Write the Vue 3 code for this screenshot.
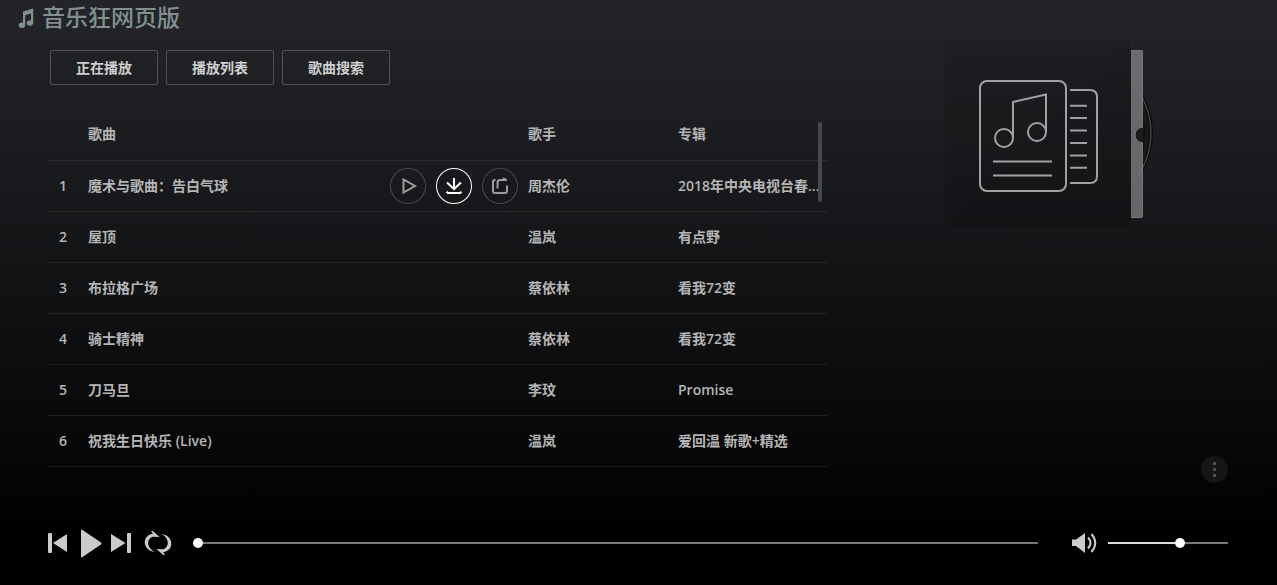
<script setup>
import { ref, computed } from 'vue'

const tabs = ['正在播放', '播放列表', '歌曲搜索']
const songs = [
  { name: '魔术与歌曲：告白气球', singer: '周杰伦', album: '2018年中央电视台春...' },
  { name: '屋顶', singer: '温岚', album: '有点野' },
  { name: '布拉格广场', singer: '蔡依林', album: '看我72变' },
  { name: '骑士精神', singer: '蔡依林', album: '看我72变' },
  { name: '刀马旦', singer: '李玟', album: 'Promise' },
  { name: '祝我生日快乐 (Live)', singer: '温岚', album: '爱回温 新歌+精选' },
]
const active = ref(0)
const progress = ref(0)
const volume = ref(61)
const volumeStyle = computed(() => ({ '--fill': volume.value + '%' }))
</script>

<template>
  <div class="player">
    <header class="brand">
      <svg class="brand-icon" viewBox="0 0 16 20" aria-hidden="true">
        <path d="M5 3.6 15.2 0.6V14.6A3.3 2.8 0 1 1 13 12.4V5.6L7.2 7.2V17A3.3 2.8 0 1 1 5 14.6Z" />
      </svg>
      <h1>音乐狂网页版</h1>
    </header>

    <main class="body">
      <section class="left">
        <nav class="tabs">
          <button v-for="t in tabs" :key="t" type="button">{{ t }}</button>
        </nav>
        <div class="list">
          <table>
            <thead>
              <tr>
                <th class="num"></th>
                <th>歌曲</th>
                <th class="singer">歌手</th>
                <th class="album">专辑</th>
              </tr>
            </thead>
            <tbody>
              <tr v-for="(s, i) in songs" :key="s.name" @mouseenter="active = i">
                <td class="num">{{ i + 1 }}</td>
                <td>
                  <div class="song">
                    <span class="name">{{ s.name }}</span>
                    <div v-if="active === i" class="actions">
                      <button type="button" aria-label="播放">
                        <svg viewBox="0 0 36 36"><path d="M13.500 11.500V24.500L25 18Z" /></svg>
                      </button>
                      <button type="button" class="lit" aria-label="下载">
                        <svg viewBox="0 0 36 36"><path d="M18 10V20.500M11 14.500 18 21.200 25 14.500M10.500 23.700 12 25H24L25.500 23.700" /></svg>
                      </button>
                      <button type="button" aria-label="分享">
                        <svg viewBox="0 0 36 36"><path d="M13.500 12H13Q11 12 11 14V23Q11 25 13 25H23Q25 25 25 23V17.500M15.500 20.500V14.500Q15.500 12 18 12H24.500M21 10 24.800 12.400" /></svg>
                      </button>
                    </div>
                  </div>
                </td>
                <td>{{ s.singer }}</td>
                <td class="album">{{ s.album }}</td>
              </tr>
            </tbody>
          </table>
          <span class="thumb"></span>
        </div>
      </section>

      <aside class="right">
        <svg class="cover" viewBox="0 0 208 188" aria-hidden="true">
          <defs>
            <linearGradient id="glass" x1="0" y1="0" x2="1" y2="1">
              <stop offset="0.5" stop-color="#000" stop-opacity="0.12" />
              <stop offset="0.5" stop-color="#000" stop-opacity="0.17" />
            </linearGradient>
            <linearGradient id="sleeve" x1="0" y1="0" x2="0" y2="1">
              <stop offset="0" stop-color="#6b6c6e" />
              <stop offset="1" stop-color="#646566" />
            </linearGradient>
            <clipPath id="peek"><rect x="186" y="0" width="22" height="188" /></clipPath>
          </defs>
          <rect width="186" height="186" fill="url(#glass)" />
          <g clip-path="url(#peek)">
            <circle cx="130" cy="93" r="77.500" fill="#111112" stroke="#0d0d0e" />
            <circle cx="130" cy="93" r="76" fill="none" stroke="#3a3a3b" />
            <circle cx="130" cy="93" r="72" fill="none" stroke="#1a1a1b" stroke-width="3" />
            <path d="M186 10H196Q198 10 198 12V176Q198 178 196 178H186Z" fill="url(#sleeve)" />
            <path d="M197.500 103V175.500Q197.500 177.500 195.500 177.500H186M186 10.500H195.500Q197.500 10.500 197.500 12.500V87" fill="none" stroke="#77787a" />
            <circle cx="130" cy="93" r="76" fill="none" stroke="#8a8a8a" stroke-opacity="0.3" />
            <path d="M198 87A8 8 0 0 0 198 103Z" fill="#1d1d1e" />
            <path d="M198 87A8 8 0 0 0 198 103" fill="none" stroke="#7c7d7e" />
          </g>
          <g fill="none" stroke="#a0a1a2" stroke-width="2">
            <rect x="35" y="41" width="86" height="110" rx="7" />
            <path d="M125 50H145Q152 50 152 57V136Q152 143 145 143H125" />
            <path d="M125 65.700H142M125 78H142M125 90.400H142M125 103H142M125 115.400H142M125 127.700H142M48 121.500H107M48 135.500H107" />
            <circle cx="59" cy="98" r="9" />
            <circle cx="92" cy="92" r="9" />
            <path d="M68 98V62L101 54.500V92" />
          </g>
        </svg>
        <button type="button" class="more" aria-label="更多"><i></i><i></i><i></i></button>
      </aside>
    </main>

    <footer class="controls">
      <div class="keys">
        <button type="button" aria-label="上一首">
          <svg width="20" height="20" viewBox="0 0 20 20"><path d="M0 1Q0 0 1 0H3Q4 0 4 1V19Q4 20 3 20H1Q0 20 0 19ZM19 1V19L5 10Z" /></svg>
        </button>
        <button type="button" class="play" aria-label="播放">
          <svg width="22" height="30" viewBox="0 0 22 30"><path d="M1 2.500Q1 1 2.500 2L21 14.500Q22.300 15.500 21 16.500L2.500 29Q1 30 1 28.500Z" /></svg>
        </button>
        <button type="button" aria-label="下一首">
          <svg width="20" height="20" viewBox="0 0 20 20"><path d="M20 1Q20 0 19 0H17Q16 0 16 1V19Q16 20 17 20H19Q20 20 20 19ZM0 1V19L14.500 10Z" /></svg>
        </button>
        <button type="button" class="loop" aria-label="循环">
          <svg width="26" height="24" viewBox="0 0 26 24">
            <path d="M9.500 20.900C-3 19.500 -3.500 4 8 2.800L6 0.300 7.500 -0.300 14.500 6 7.500 5.800C1 8 2 17.500 9.500 20.900Z" />
            <path d="M16.500 3.100C29 4.500 29.500 20 18 21.200L20 23.700 18.500 24.300 11.500 18 18.500 18.200C25 16 24 6.500 16.500 3.100Z" />
          </svg>
        </button>
      </div>
      <input v-model="progress" class="range seek" type="range" min="0" max="100" aria-label="播放进度" />
      <button type="button" class="mute" aria-label="音量">
        <svg width="26" height="22" viewBox="0 0 26 22">
          <path d="M0 7.500H4L13 1V21L4 14H0Z" />
          <path class="wave" d="M16 5.500Q21 11 16 16.500M19.500 2Q27 11 19.500 20" />
        </svg>
      </button>
      <input v-model="volume" class="range vol" :style="volumeStyle" type="range" min="0" max="100" aria-label="音量大小" />
    </footer>
  </div>
</template>

<style>
html,
body {
  background: #000;
}
</style>

<style scoped>
.player {
  box-sizing: border-box;
  min-height: 100vh;
  display: flex;
  flex-direction: column;
  background: linear-gradient(#242529 0%, #1c1d20 22%, #131416 45%, #09090a 72%, #000 92%);
  color: #b5b5b5;
  font: 600 14px/20px "Open Sans", "Noto Sans CJK SC", sans-serif;
}
button {
  padding: 0;
  border: 0;
  background: none;
  color: inherit;
  font: inherit;
  cursor: pointer;
}
svg {
  display: block;
  overflow: visible;
}
.brand {
  display: flex;
  align-items: center;
  gap: 8px;
  height: 36px;
  padding-left: 18px;
  color: #829092;
}
.brand-icon {
  width: 16px;
  height: 20px;
  fill: currentColor;
}
h1 {
  margin: 0;
  font-size: 23px;
  line-height: 34px;
  padding-bottom: 2px;
  font-weight: 500;
}
.body {
  flex: 1;
  display: flex;
}
.left {
  flex: 1;
  min-width: 0;
  padding: 14px 0 16px 48px;
}
.tabs {
  display: flex;
  gap: 8px;
  padding-left: 2px;
}
.tabs button {
  width: 108px;
  height: 35px;
  border: 1px solid #505155;
  border-radius: 2px;
  color: #cfcfcf;
}
.list {
  position: relative;
  margin-top: 24px;
}
table {
  width: 100%;
  table-layout: fixed;
  border-collapse: collapse;
}
th,
td {
  box-sizing: border-box;
  height: 51px;
  padding: 0;
  border-bottom: 1px solid rgba(255, 255, 255, 0.08);
  text-align: left;
  font-weight: 600;
}
.num {
  width: 40px;
  padding-right: 10px;
  text-align: center;
}
.singer {
  width: 150px;
}
.album {
  width: 150px;
  padding-right: 6px;
  overflow: hidden;
  text-overflow: ellipsis;
  white-space: nowrap;
}
.song {
  display: flex;
  align-items: center;
  padding-right: 10px;
}
.name {
  flex: 1;
}
.actions {
  display: flex;
  gap: 10px;
}
.actions button {
  box-sizing: border-box;
  width: 36px;
  height: 36px;
  border-radius: 50%;
  box-shadow: inset 0 0 0 1px #47484a;
  color: #9c9d9e;
}
.actions .lit {
  box-shadow: inset 0 0 0 1px #fff;
  color: #fff;
}
.actions path {
  fill: none;
  stroke: currentColor;
  stroke-width: 2;
}
.thumb {
  position: absolute;
  top: 13px;
  right: 6px;
  width: 4px;
  height: 80px;
  border-radius: 2px;
  background: #47484a;
}
.right {
  display: flex;
  flex-direction: column;
  justify-content: space-between;
  width: 283px;
  padding: 4px 49px 18px 117px;
}
.cover {
  width: 208px;
  height: 188px;
}
.more {
  display: flex;
  flex-direction: column;
  align-items: center;
  justify-content: center;
  gap: 3px;
  align-self: flex-end;
  width: 27px;
  height: 27px;
  border-radius: 50%;
  background: #161616;
}
.more i {
  width: 3px;
  height: 3px;
  background: #505050;
}
.controls {
  display: flex;
  align-items: center;
  height: 84px;
  padding: 0 49px 0 48px;
}
.keys {
  display: flex;
  align-items: center;
  color: #cbcbcb;
}
.keys svg,
.mute svg {
  fill: #cbcbcb;
}
.play {
  margin: 0 9px 0 12px;
}
.loop {
  margin-left: 14px;
}
.mute .wave {
  fill: none;
  stroke: #cbcbcb;
  stroke-width: 2;
}
.mute {
  margin: 0 10px 0 34px;
}
.range {
  appearance: none;
  height: 10px;
  margin: 0;
  background: linear-gradient(to right, #ddd var(--fill, 0%), #777 var(--fill, 0%)) center / 100% 2px no-repeat;
}
.range::-webkit-slider-thumb {
  appearance: none;
  width: 10px;
  height: 10px;
  border-radius: 50%;
  background: #fff;
}
.seek {
  flex: 1;
  min-width: 0;
  margin-left: 22px;
}
.vol {
  width: 120px;
}
</style>
